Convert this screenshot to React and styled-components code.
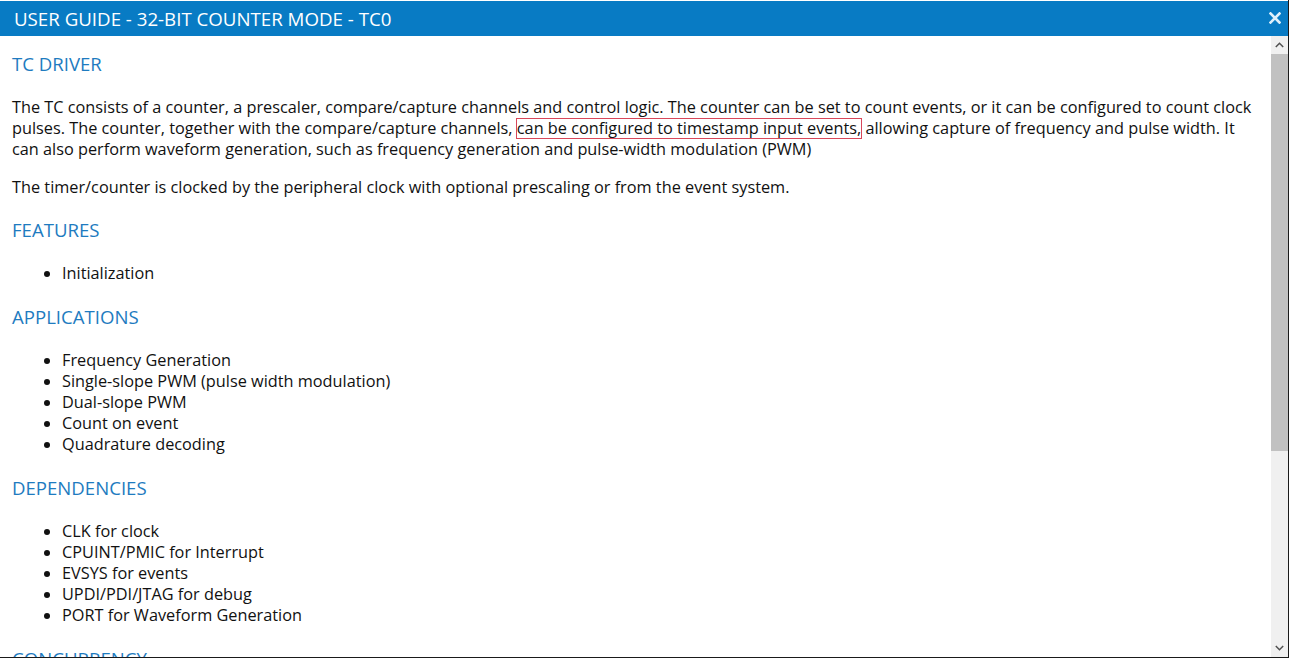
import React from 'react'
import styled, { createGlobalStyle } from 'styled-components'

const GlobalStyle = createGlobalStyle`
  html, body {
    margin: 0;
    padding: 0;
    background: #fff;
  }
  body {
    font-family: "Open Sans", "Liberation Sans", sans-serif;
  }
`

const sections = [
  {
    title: 'FEATURES',
    items: ['Initialization'],
  },
  {
    title: 'APPLICATIONS',
    items: [
      'Frequency Generation',
      'Single-slope PWM (pulse width modulation)',
      'Dual-slope PWM',
      'Count on event',
      'Quadrature decoding',
    ],
  },
  {
    title: 'DEPENDENCIES',
    items: [
      'CLK for clock',
      'CPUINT/PMIC for Interrupt',
      'EVSYS for events',
      'UPDI/PDI/JTAG for debug',
      'PORT for Waveform Generation',
    ],
  },
  {
    title: 'CONCURRENCY',
    items: [],
  },
]

function CloseIcon() {
  return (
    <svg width="12" height="12" viewBox="0 0 12 12">
      <path d="M1.5 1.5 L10.5 10.5 M10.5 1.5 L1.5 10.5" stroke="#dff0fb" strokeWidth="2.6" strokeLinecap="square" />
    </svg>
  )
}

function Chevron({ up }) {
  return (
    <svg width="9" height="6" viewBox="0 0 9 6">
      <path
        d={up ? 'M0.8 5 L4.5 1.3 L8.2 5' : 'M0.8 1 L4.5 4.7 L8.2 1'}
        stroke="#505050"
        strokeWidth="1.5"
        fill="none"
      />
    </svg>
  )
}

export default function App() {
  return (
    <>
      <GlobalStyle />
      <S.Window>
        <S.TitleBar>
          <S.Title>USER GUIDE - 32-BIT COUNTER MODE - TC0</S.Title>
          <S.CloseButton><CloseIcon /></S.CloseButton>
        </S.TitleBar>
        <S.Body>
          <S.Content>
            <S.Heading>TC DRIVER</S.Heading>
            <S.Paragraph>
              The TC consists of a counter, a prescaler, compare/capture channels and control logic. The counter can be set to count events, or it can be configured to count clock pulses. The counter, together with the compare/capture channels, <S.Highlight>can be configured to timestamp input events,</S.Highlight> allowing capture of frequency and pulse width. It can also perform waveform generation, such as frequency generation and pulse-width modulation (PWM)
            </S.Paragraph>
            <S.Paragraph>
              The timer/counter is clocked by the peripheral clock with optional prescaling or from the event system.
            </S.Paragraph>
            {sections.map(section => (
              <React.Fragment key={section.title}>
                <S.Heading>{section.title}</S.Heading>
                {section.items.length > 0 && (
                  <S.List>
                    {section.items.map(item => <S.Item key={item}>{item}</S.Item>)}
                  </S.List>
                )}
              </React.Fragment>
            ))}
          </S.Content>
          <S.Scrollbar>
            <S.Arrow><Chevron up /></S.Arrow>
            <S.Track>
              <S.Thumb style={{ height: '397px' }} />
            </S.Track>
            <S.Arrow><Chevron /></S.Arrow>
          </S.Scrollbar>
        </S.Body>
      </S.Window>
    </>
  )
}

const S = {
  Window: styled.div`
    width: 1289px;
    height: 658px;
    box-sizing: border-box;
    padding-top: 1px;
    border-right: 1px solid #1a1a1a;
    border-bottom: 1px solid #1a1a1a;
    display: flex;
    flex-direction: column;
    overflow: hidden;
    background: #fff;
  `,

  TitleBar: styled.div`
    height: 35px;
    flex-shrink: 0;
    background: #087bc4;
    display: flex;
    align-items: center;
    padding: 0 6px 0 14px;
  `,

  Title: styled.div`
    flex-grow: 1;
    color: #fff;
    font-size: 18.7px;
  `,

  CloseButton: styled.div`
    display: flex;
    align-items: center;
    justify-content: center;
    width: 14px;
    height: 14px;
    margin-top: -2px;
  `,

  Body: styled.div`
    flex-grow: 1;
    display: flex;
    min-height: 0;
  `,

  Content: styled.div`
    flex-grow: 1;
    overflow: hidden;
    padding: 16px 14px 0 12px;
    color: #111;
    font-size: 16.3px;
    line-height: 21px;
  `,

  Heading: styled.h2`
    margin: 20px 0 21px;
    font-weight: 400;
    font-size: 18.6px;
    line-height: 24px;
    color: #1e7bc0;
    &:first-child {
      margin-top: 0;
    }
  `,

  Paragraph: styled.p`
    margin: 0 0 17px;
  `,

  Highlight: styled.span`
    display: inline-block;
    line-height: 19px;
    border: 1px solid #d8475a;
    margin: 0 -1px;
  `,

  List: styled.ul`
    margin: 0 0 21px;
    padding-left: 50px;
    list-style: disc;
  `,

  Item: styled.li`
    padding-left: 0;
  `,

  Scrollbar: styled.div`
    width: 17px;
    flex-shrink: 0;
    background: #f0f0f0;
    display: flex;
    flex-direction: column;
  `,

  Arrow: styled.div`
    height: 18px;
    display: flex;
    align-items: center;
    justify-content: center;
  `,

  Track: styled.div`
    flex-grow: 1;
    display: flex;
    flex-direction: column;
  `,

  Thumb: styled.div`
    background: #c1c1c1;
    flex-shrink: 0;
  `,
}
